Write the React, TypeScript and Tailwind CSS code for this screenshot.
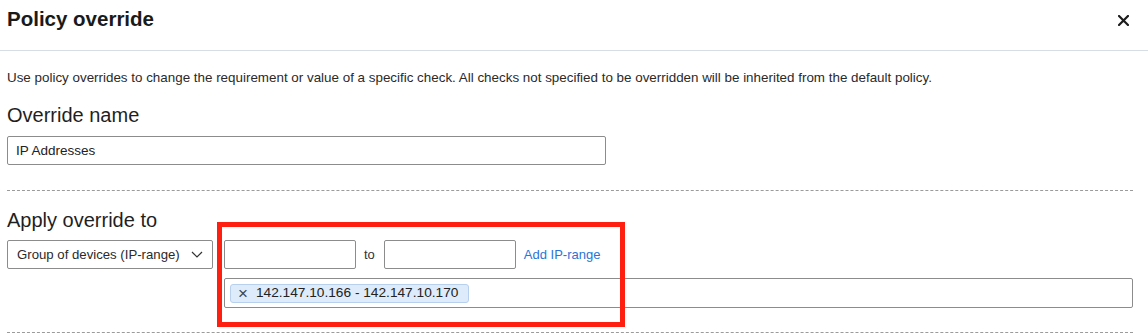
import React from 'react'

const font = { fontFamily: '"Liberation Sans", Arial, sans-serif' }

function CloseIcon() {
  return (
    <svg width="11" height="11" viewBox="0 0 11 11" className="text-[#1c1c1c]">
      <path d="M1 1 L10 10 M10 1 L1 10" stroke="currentColor" strokeWidth="2.2" strokeLinecap="square" />
    </svg>
  )
}

function Chevron() {
  return (
    <svg width="12" height="7" viewBox="0 0 12 7" className="text-[#333]">
      <path d="M1 1 L6 6 L11 1" fill="none" stroke="currentColor" strokeWidth="1.2" />
    </svg>
  )
}

export default function App() {
  return (
    <div className="relative h-[335px] w-[1148px] overflow-hidden bg-white text-[#222]" style={font}>
      {/* header */}
      <div className="flex h-[51px] items-start justify-between border-b border-[#d6dde4] pl-[7px] pr-[19px] pt-[7px]">
        <h1 className="text-[20.5px] font-bold leading-6 text-[#1a1a1a]">Policy override</h1>
        <button type="button" className="mt-[8px]">
          <CloseIcon />
        </button>
      </div>

      <div className="pl-[7px] pr-[15px]">
        <p className="mt-[19px] h-4 whitespace-nowrap text-[13.4px] leading-4 text-[#2a2a2a]">
          Use policy overrides to change the requirement or value of a specific check. All checks not specified to be
          overridden will be inherited from the default policy.
        </p>

        <div className="mt-[18px] h-[22px] text-[20px] leading-[22px] text-[#1f1f1f]">Override name</div>
        <input
          type="text"
          defaultValue="IP Addresses"
          className="mt-[10px] block h-[29px] w-[599px] rounded-[2px] border border-[#8c8c8c] px-2 text-[13.5px] font-medium text-[#222] outline-none"
        />

        <div className="mt-[25px] border-t border-dashed border-[#9b9b9b]" />

        <div className="mt-[18px] h-[22px] text-[20px] leading-[22px] text-[#1f1f1f]">Apply override to</div>

        <div className="mt-[9px] flex gap-[11px]">
          <div className="flex h-[29px] w-[206px] shrink-0 items-center justify-between rounded-[2px] border border-[#8c8c8c] pl-[9px] pr-[9px] text-[13.2px] text-[#2a2a2a]">
            <span>Group of devices (IP-range)</span>
            <Chevron />
          </div>

          <div className="flex flex-1 flex-col gap-[9px]">
            <div className="flex h-[29px] items-center">
              <input
                type="text"
                className="h-[29px] w-[132px] rounded-[2px] border border-[#8c8c8c] outline-none"
              />
              <span className="ml-[8px] mr-[9px] text-[13px] text-[#333]">to</span>
              <input
                type="text"
                className="h-[29px] w-[132px] rounded-[2px] border border-[#8c8c8c] outline-none"
              />
              <a href="#" className="ml-[8px] text-[13px] text-[#2b74d6]">
                Add IP-range
              </a>
            </div>

            <div className="flex h-[30px] items-center rounded-[2px] border border-[#8c8c8c] px-[5px]">
              <span className="flex h-[19px] items-center gap-[8px] rounded-[3px] border border-[#b7d0ee] bg-[#deebfa] pl-[7px] pr-[10px] text-[13.7px] text-[#222]">
                <span className="text-[17px] leading-none text-[#444]">×</span>
                142.147.10.166 - 142.147.10.170
              </span>
            </div>
          </div>
        </div>

        <div className="mt-[24px] border-t border-dashed border-[#9b9b9b]" />
      </div>

      {/* annotation */}
      <div className="pointer-events-none absolute left-[217px] top-[222px] h-[105px] w-[408px] border-[5px] border-[#fe1f10]" />
    </div>
  )
}
